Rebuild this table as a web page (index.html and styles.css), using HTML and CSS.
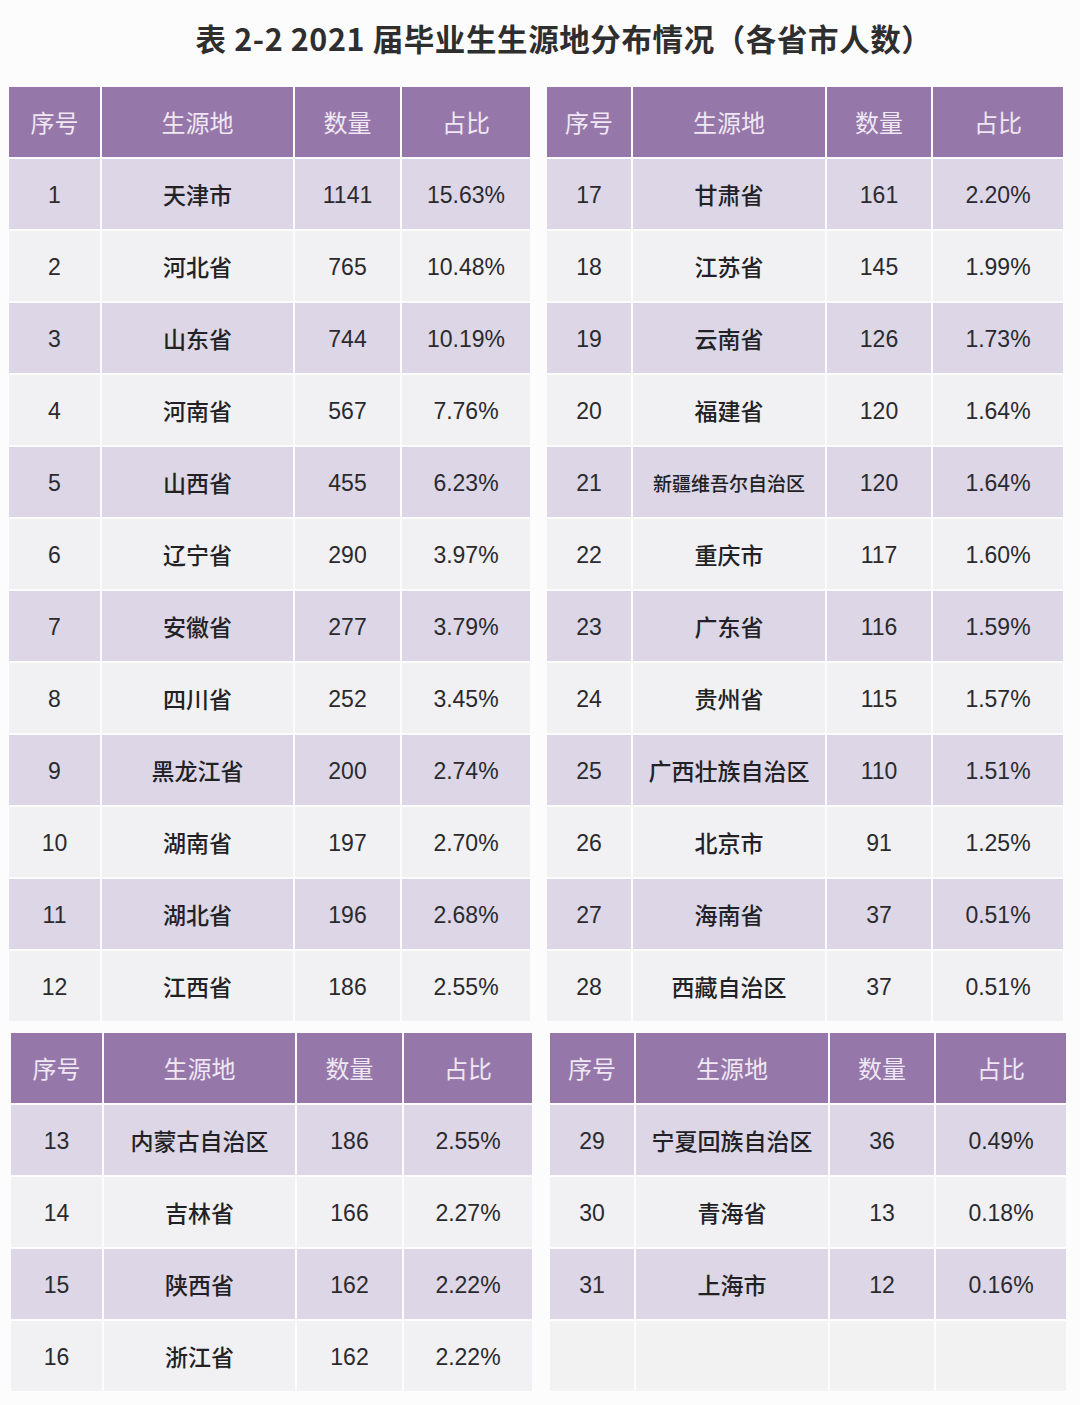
FILE: index.html
```html
<!DOCTYPE html>
<html lang="zh-CN">
<head>
<meta charset="utf-8">
<title>表 2-2 2021 届毕业生生源地分布情况</title>
<link rel="stylesheet" href="styles.css">
</head>
<body>
<div class="page">
  <h1 class="title">表 2-2 2021 届毕业生生源地分布情况（各省市人数）</h1>

  <div class="block">
    <div class="table left">
      <div class="row head"><div>序号</div><div>生源地</div><div>数量</div><div>占比</div></div>
      <div class="row odd"><div>1</div><div class="cn">天津市</div><div>1141</div><div>15.63%</div></div>
      <div class="row even"><div>2</div><div class="cn">河北省</div><div>765</div><div>10.48%</div></div>
      <div class="row odd"><div>3</div><div class="cn">山东省</div><div>744</div><div>10.19%</div></div>
      <div class="row even"><div>4</div><div class="cn">河南省</div><div>567</div><div>7.76%</div></div>
      <div class="row odd"><div>5</div><div class="cn">山西省</div><div>455</div><div>6.23%</div></div>
      <div class="row even"><div>6</div><div class="cn">辽宁省</div><div>290</div><div>3.97%</div></div>
      <div class="row odd"><div>7</div><div class="cn">安徽省</div><div>277</div><div>3.79%</div></div>
      <div class="row even"><div>8</div><div class="cn">四川省</div><div>252</div><div>3.45%</div></div>
      <div class="row odd"><div>9</div><div class="cn">黑龙江省</div><div>200</div><div>2.74%</div></div>
      <div class="row even"><div>10</div><div class="cn">湖南省</div><div>197</div><div>2.70%</div></div>
      <div class="row odd"><div>11</div><div class="cn">湖北省</div><div>196</div><div>2.68%</div></div>
      <div class="row even"><div>12</div><div class="cn">江西省</div><div>186</div><div>2.55%</div></div>
    </div>
    <div class="table right">
      <div class="row head"><div>序号</div><div>生源地</div><div>数量</div><div>占比</div></div>
      <div class="row odd"><div>17</div><div class="cn">甘肃省</div><div>161</div><div>2.20%</div></div>
      <div class="row even"><div>18</div><div class="cn">江苏省</div><div>145</div><div>1.99%</div></div>
      <div class="row odd"><div>19</div><div class="cn">云南省</div><div>126</div><div>1.73%</div></div>
      <div class="row even"><div>20</div><div class="cn">福建省</div><div>120</div><div>1.64%</div></div>
      <div class="row odd"><div>21</div><div class="cn small">新疆维吾尔自治区</div><div>120</div><div>1.64%</div></div>
      <div class="row even"><div>22</div><div class="cn">重庆市</div><div>117</div><div>1.60%</div></div>
      <div class="row odd"><div>23</div><div class="cn">广东省</div><div>116</div><div>1.59%</div></div>
      <div class="row even"><div>24</div><div class="cn">贵州省</div><div>115</div><div>1.57%</div></div>
      <div class="row odd"><div>25</div><div class="cn">广西壮族自治区</div><div>110</div><div>1.51%</div></div>
      <div class="row even"><div>26</div><div class="cn">北京市</div><div>91</div><div>1.25%</div></div>
      <div class="row odd"><div>27</div><div class="cn">海南省</div><div>37</div><div>0.51%</div></div>
      <div class="row even"><div>28</div><div class="cn">西藏自治区</div><div>37</div><div>0.51%</div></div>
    </div>
  </div>

  <div class="block lower">
    <div class="table left">
      <div class="row head"><div>序号</div><div>生源地</div><div>数量</div><div>占比</div></div>
      <div class="row odd"><div>13</div><div class="cn">内蒙古自治区</div><div>186</div><div>2.55%</div></div>
      <div class="row even"><div>14</div><div class="cn">吉林省</div><div>166</div><div>2.27%</div></div>
      <div class="row odd"><div>15</div><div class="cn">陕西省</div><div>162</div><div>2.22%</div></div>
      <div class="row even"><div>16</div><div class="cn">浙江省</div><div>162</div><div>2.22%</div></div>
    </div>
    <div class="table right">
      <div class="row head"><div>序号</div><div>生源地</div><div>数量</div><div>占比</div></div>
      <div class="row odd"><div>29</div><div class="cn">宁夏回族自治区</div><div>36</div><div>0.49%</div></div>
      <div class="row even"><div>30</div><div class="cn">青海省</div><div>13</div><div>0.18%</div></div>
      <div class="row odd"><div>31</div><div class="cn">上海市</div><div>12</div><div>0.16%</div></div>
      <div class="row even empty"><div></div><div></div><div></div><div></div></div>
    </div>
  </div>
</div>
</body>
</html>
```

FILE: styles.css
```css
html, body {
  margin: 0;
  padding: 0;
  background: #ffffff;
}

.page {
  width: 1080px;
  height: 1405px;
  background: #fdfcfd;
  font-family: "Liberation Sans", "Noto Sans CJK SC", sans-serif;
  color: #2a2a2e;
  overflow: hidden;
}

.title {
  margin: 0;
  padding-top: 18px;
  padding-left: 48px;
  height: 68px;
  box-sizing: border-box;
  text-align: center;
  font-family: "Noto Sans CJK SC", sans-serif;
  font-weight: 700;
  font-size: 30.5px;
  line-height: 40px;
  color: #2e2e2e;
  letter-spacing: 0.6px;
}

.block {
  display: flex;
  gap: 17px;
  padding-left: 9px;
  margin-top: 19px;
}

.block.lower {
  margin-top: 12px;
  padding-left: 11px;
  gap: 18px;
}

.table {
  display: flex;
  flex-direction: column;
  gap: 2px;
}

.table.left .row {
  grid-template-columns: 91px 191px 105px 128px;
}

.table.right .row {
  grid-template-columns: 84px 192px 104px 130px;
}

.row {
  display: grid;
  gap: 2px;
  height: 70px;
}

.row > div {
  display: flex;
  align-items: center;
  justify-content: center;
  font-size: 23px;
  line-height: 1;
  white-space: nowrap;
  padding-top: 2px;
  box-sizing: border-box;
}

.row.head > div {
  background: #9677a9;
  color: #efe7f3;
  font-family: "Noto Sans CJK SC", sans-serif;
  font-size: 24px;
  font-weight: 400;
  padding-top: 0;
}

.row.odd > div {
  background: #dcd6e6;
}

.row.even > div {
  background: #f1f0f2;
}

.row.empty > div {
  background: #f2f2f2;
}

.row > .cn {
  font-family: "Noto Sans CJK SC", sans-serif;
  font-size: 23px;
  font-weight: 500;
  color: #222226;
  padding-top: 0;
}

.row > .cn.small {
  font-size: 19px;
}
```
